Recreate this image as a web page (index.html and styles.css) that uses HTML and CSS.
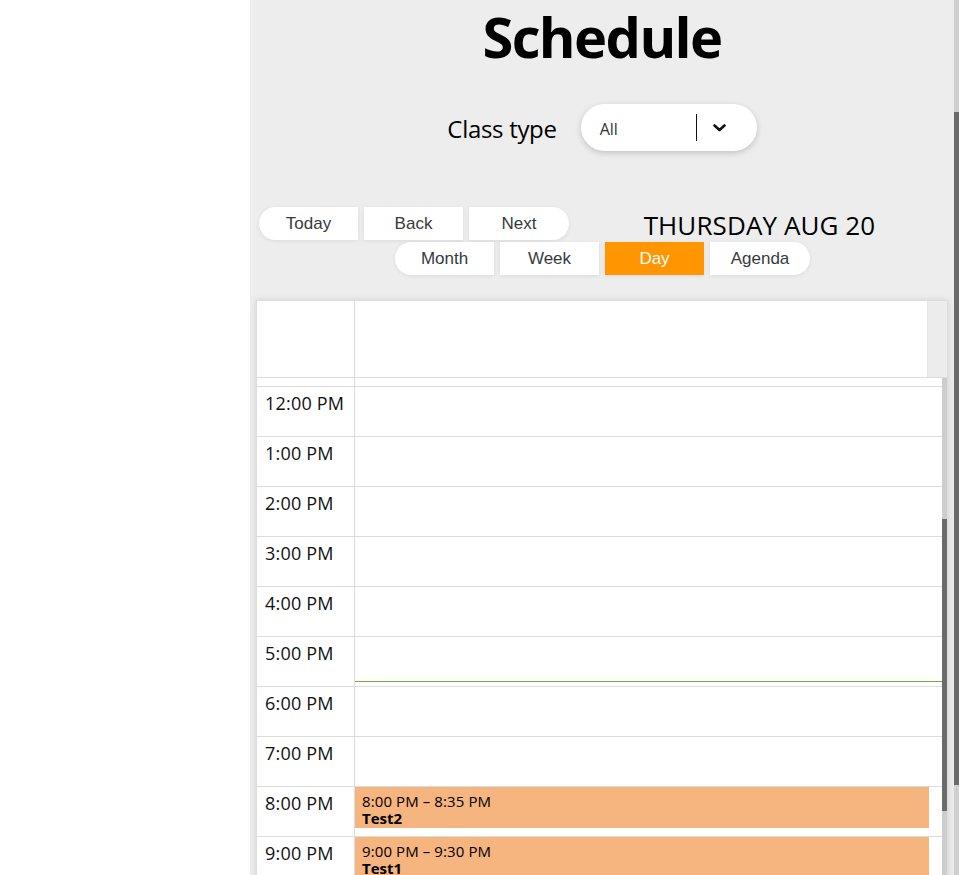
FILE: index.html
```html
<!DOCTYPE html>
<html lang="en">
<head>
<meta charset="utf-8">
<title>Schedule</title>
<link rel="stylesheet" href="styles.css">
</head>
<body>
<div class="page">
  <aside class="sidebar"></aside>
  <main class="main">
    <h1 class="title">Schedule</h1>
    <div class="filter">
      <span class="filter-label">Class type</span>
      <div class="select">
        <span class="select-value">All</span>
        <span class="select-sep"></span>
        <svg class="chevron" width="13" height="8" viewBox="0 0 13 8"><path d="M1.5 1.5 L6.5 6 L11.5 1.5" fill="none" stroke="#111" stroke-width="2.6" stroke-linecap="round" stroke-linejoin="round"/></svg>
      </div>
    </div>
    <div class="toolbar">
      <div class="btn-group first-group">
        <button class="btn">Today</button>
        <button class="btn">Back</button>
        <button class="btn">Next</button>
      </div>
      <span class="toolbar-label">THURSDAY AUG 20</span>
      <div class="btn-group">
        <button class="btn">Month</button>
        <button class="btn">Week</button>
        <button class="btn active">Day</button>
        <button class="btn">Agenda</button>
      </div>
    </div>
    <div class="calendar">
      <div class="cal-header">
        <div class="header-gutter"></div>
        <div class="header-cell"></div>
        <div class="header-gap"></div>
      </div>
      <div class="cal-body">
        <div class="cal-content">
          <div class="row allday"><div class="gutter"></div><div class="cell"></div></div>
          <div class="row"><div class="gutter">12:00 PM</div><div class="cell"></div></div>
          <div class="row"><div class="gutter">1:00 PM</div><div class="cell"></div></div>
          <div class="row"><div class="gutter">2:00 PM</div><div class="cell"></div></div>
          <div class="row"><div class="gutter">3:00 PM</div><div class="cell"></div></div>
          <div class="row"><div class="gutter">4:00 PM</div><div class="cell"></div></div>
          <div class="row"><div class="gutter">5:00 PM</div><div class="cell"><div class="now-line"></div></div></div>
          <div class="row"><div class="gutter">6:00 PM</div><div class="cell"></div></div>
          <div class="row"><div class="gutter">7:00 PM</div><div class="cell"></div></div>
          <div class="row"><div class="gutter">8:00 PM</div><div class="cell"><div class="event"><div class="event-time">8:00 PM – 8:35 PM</div><div class="event-title">Test2</div></div></div></div>
          <div class="row"><div class="gutter">9:00 PM</div><div class="cell"><div class="event"><div class="event-time">9:00 PM – 9:30 PM</div><div class="event-title">Test1</div></div></div></div>
          <div class="row"><div class="gutter">10:00 PM</div><div class="cell"></div></div>
          <div class="row"><div class="gutter">11:00 PM</div><div class="cell"></div></div>
        </div>
        <div class="inner-scrollbar"><div class="inner-track-top"></div><div class="inner-thumb"></div><div class="inner-track-bottom"></div></div>
      </div>
    </div>
  </main>
  <div class="page-scrollbar"><div class="page-track-top"></div><div class="page-thumb"></div><div class="page-track-bottom"></div></div>
</div>
</body>
</html>
```
FILE: styles.css
```css
* { box-sizing: border-box; }
html, body { margin: 0; padding: 0; }
body {
  font-family: "Open Sans", "Noto Sans", sans-serif;
  color: #000;
  background: #fff;
  overflow: hidden;
}
.page {
  display: flex;
  height: 875px;
  overflow: hidden;
}
.sidebar {
  width: 250px;
  flex: none;
  background: #fff;
}
.main {
  flex: 1;
  background: #ededed;
  display: flex;
  flex-direction: column;
  overflow: hidden;
  min-width: 0;
}
.title {
  margin: 0;
  font-size: 56px;
  line-height: 72px;
  font-weight: 700;
  letter-spacing: -1.6px;
  text-align: center;
}
.filter {
  margin-top: 32px;
  display: flex;
  justify-content: center;
  align-items: center;
  gap: 24px;
  height: 47px;
}
.filter-label {
  font-size: 24px;
  letter-spacing: -0.3px;
  padding-top: 2px;
}
.select {
  width: 176px;
  height: 47px;
  background: #fff;
  border-radius: 24px;
  box-shadow: 0 2px 6px rgba(0,0,0,0.18);
  display: flex;
  align-items: center;
  padding-left: 19px;
}
.select-value {
  font-family: "Open Sans", sans-serif;
  font-size: 16px;
  color: #333;
  width: 96px;
  padding-top: 2px;
}
.select-sep {
  width: 1px;
  height: 27px;
  background: #111;
  margin-right: 16px;
}
.chevron { display: block; }
.toolbar {
  margin: 56px 4px 0 5px;
  display: flex;
  flex-wrap: wrap;
  justify-content: center;
  align-items: center;
  row-gap: 2px;
}
.btn-group {
  display: flex;
  gap: 6px;
}
.first-group { margin-left: 4px; }
.btn {
  width: 99px;
  height: 33px;
  border: none;
  background: #fff;
  font-family: "Liberation Sans", Arial, sans-serif;
  font-size: 17px;
  color: #373a3c;
  padding: 0;
  box-shadow: 0 1px 4px rgba(0,0,0,0.08);
}
.btn-group .btn:first-child { border-radius: 17px 0 0 17px; }
.btn-group .btn:last-child { border-radius: 0 17px 17px 0; width: 100px; }
.btn.active {
  background: #ff9500;
  color: #fff;
}
.toolbar-label {
  flex: 1;
  text-align: center;
  font-size: 26px;
  letter-spacing: 0.1px;
  line-height: 33px;
  height: 33px;
  position: relative;
  top: 2px;
}
.calendar {
  margin: 25px 6px 0 6px;
  background: #fff;
  border: 1px solid #ddd;
  box-shadow: 0 0 6px rgba(0,0,0,0.12);
  flex: none;
}
.cal-header {
  display: flex;
  height: 77px;
  border-bottom: 1px solid #ddd;
}
.header-gutter {
  width: 98px;
  border-right: 1px solid #ddd;
}
.header-cell { flex: 1; }
.header-gap {
  width: 20px;
  background: #ececec;
  border-left: 1px solid #e6e6e6;
}
.cal-body {
  display: flex;
}
.cal-content { flex: 1; }
.row {
  display: flex;
  height: 50px;
  border-bottom: 1px solid #ddd;
}
.row.allday { height: 9px; }
.gutter {
  width: 98px;
  border-right: 1px solid #ddd;
  font-size: 18px;
  line-height: 24px;
  padding: 4px 0 0 8px;
  color: #111;
  white-space: nowrap;
  letter-spacing: 0.2px;
}
.cell {
  flex: 1;
  position: relative;
}
.now-line {
  position: absolute;
  left: 0;
  right: 0;
  top: 44px;
  height: 1px;
  background: #74ad31;
}
.event {
  margin-right: 13px;
  height: 41px;
  background: #f6b47f;
  padding: 6px 7px 0 7px;
  font-size: 15px;
  line-height: 17px;
  color: #000;
  overflow: hidden;
}
.event-time { letter-spacing: 0.1px; }
.event-title { font-weight: 700; }
.inner-scrollbar {
  width: 5px;
  display: flex;
  flex-direction: column;
}
.inner-track-top { height: 141px; background: #cdcdcd; }
.inner-thumb { height: 292px; background: #6b6b6b; }
.inner-track-bottom { flex: 1; background: #cdcdcd; }
.page-scrollbar {
  width: 5px;
  flex: none;
  display: flex;
  flex-direction: column;
}
.page-track-top { height: 112px; background: #cfcfcf; }
.page-thumb { height: 673px; background: #6b6b6b; }
.page-track-bottom { flex: 1; background: #cfcfcf; }
```
